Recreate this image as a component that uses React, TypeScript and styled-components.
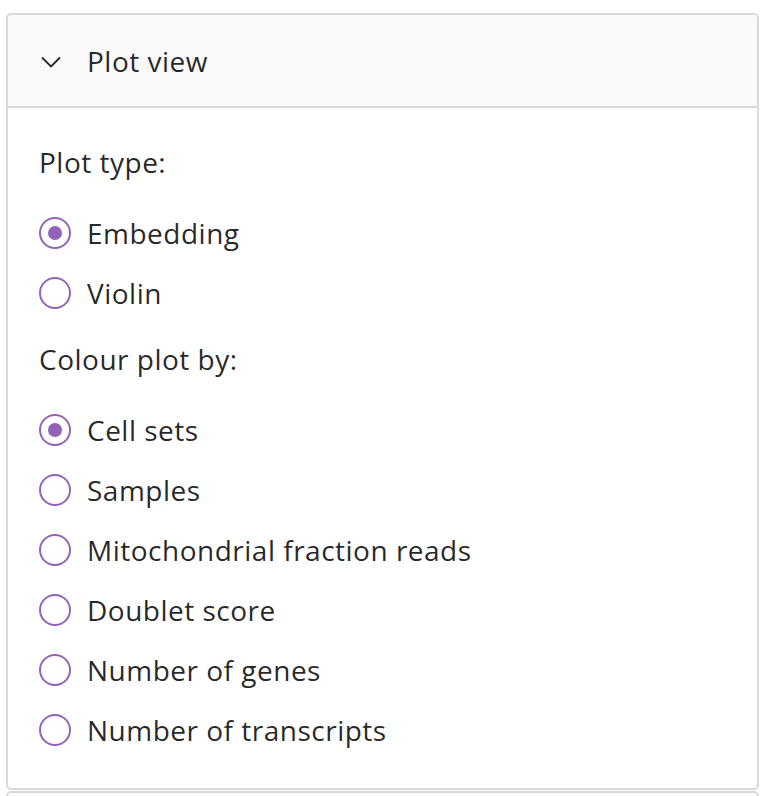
import styled, { createGlobalStyle } from 'styled-components';

const GlobalStyle = createGlobalStyle`
  html, body {
    margin: 0;
    padding: 0;
    background: #ffffff;
  }
  body {
    font-family: "Open Sans", "Noto Sans", sans-serif;
    color: rgba(0, 0, 0, 0.85);
  }
`;

const PURPLE = '#9264b8';

const plotTypes = ['Embedding', 'Violin'];
const colourOptions = [
  'Cell sets',
  'Samples',
  'Mitochondrial fraction reads',
  'Doublet score',
  'Number of genes',
  'Number of transcripts',
];

function Chevron() {
  return (
    <svg width="20" height="12" viewBox="0 0 20 12" fill="none">
      <path d="M1 1.5 L10 10.5 L19 1.5" stroke="#262626" strokeWidth="1.8" />
    </svg>
  );
}

function Radio({ label, checked }: { label: string; checked?: boolean }) {
  return (
    <RadioRow>
      <RadioCircle $checked={checked} />
      <RadioLabel>{label}</RadioLabel>
    </RadioRow>
  );
}

export default function App() {
  return (
    <>
      <GlobalStyle />
      <Page>
        <Collapse>
          <PanelHeader>
            <Chevron />
            <HeaderTitle>Plot view</HeaderTitle>
          </PanelHeader>
          <PanelContent>
            <GroupLabel>Plot type:</GroupLabel>
            <RadioGroup>
              {plotTypes.map((t, i) => (
                <Radio key={t} label={t} checked={i === 0} />
              ))}
            </RadioGroup>
            <GroupLabel>Colour plot by:</GroupLabel>
            <RadioGroup>
              {colourOptions.map((t, i) => (
                <Radio key={t} label={t} checked={i === 0} />
              ))}
            </RadioGroup>
          </PanelContent>
        </Collapse>
        <NextPanel />
      </Page>
    </>
  );
}

const Page = styled.main`
  padding: 13px 7px 0 6px;
  height: 796px;
  box-sizing: border-box;
  overflow: hidden;
`;

const Collapse = styled.section`
  border: 2px solid #d9d9d9;
  border-radius: 5px;
  background: #ffffff;
`;

const PanelHeader = styled.div`
  display: flex;
  align-items: center;
  gap: 26px;
  height: 91px;
  padding: 0 33px;
  background: #fafafa;
  border-bottom: 2px solid #d9d9d9;
  border-radius: 4px 4px 0 0;
  svg {
    margin-top: 2px;
  }
`;

const HeaderTitle = styled.span`
  font-size: 28px;
  letter-spacing: 0.5px;
  line-height: 44px;
`;

const PanelContent = styled.div`
  padding: 32px 31px 28px;
  display: flex;
  flex-direction: column;
`;

const GroupLabel = styled.div`
  font-size: 28px;
  letter-spacing: 0.5px;
  line-height: 44px;
`;

const RadioGroup = styled.div`
  display: flex;
  flex-direction: column;
  margin: 19px 0 14px;
  &:last-child {
    margin-bottom: 0;
  }
`;

const RadioRow = styled.label`
  display: flex;
  align-items: center;
  height: 60px;
`;

const RadioCircle = styled.span<{ $checked?: boolean }>`
  position: relative;
  width: 32px;
  height: 32px;
  box-sizing: border-box;
  border: 2px solid ${PURPLE};
  border-radius: 50%;
  flex-shrink: 0;
  &::after {
    content: '';
    position: absolute;
    top: 50%;
    left: 50%;
    width: 14px;
    height: 14px;
    margin: -7px 0 0 -7px;
    border-radius: 50%;
    background: ${PURPLE};
    display: ${(p) => (p.$checked ? 'block' : 'none')};
  }
`;

const RadioLabel = styled.span`
  font-size: 28px;
  letter-spacing: 0.5px;
  line-height: 44px;
  margin-left: 16px;
`;

const NextPanel = styled.div`
  margin-top: 1px;
  height: 20px;
  border: 2px solid #d9d9d9;
  border-radius: 5px 5px 0 0;
  background: #fafafa;
`;
